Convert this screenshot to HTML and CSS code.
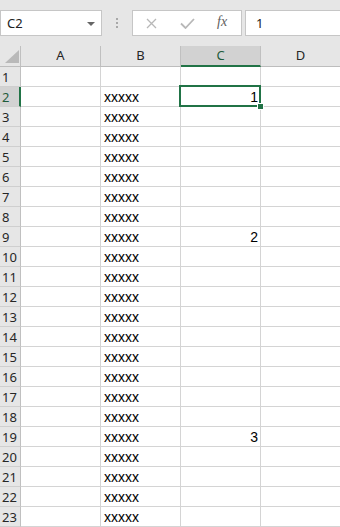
FILE: index.html
```html
<!DOCTYPE html>
<html lang="en">
<head>
    <meta charset="UTF-8">
    <meta name="viewport" content="width=device-width, initial-scale=1.0">
    <title>Sheet1</title>
    <link rel="stylesheet" href="styles.css">
</head>
<body>
    <div class="bar">
        <div class="namebox">
            <span>C2</span>
            <svg class="caret" width="8" height="4" viewBox="0 0 8 4"><polygon points="0,0 8,0 4,4" fill="#666"/></svg>
        </div>
        <div class="grip"><i></i><i></i><i></i></div>
        <div class="fxbtns">
            <svg class="btn-x" width="11" height="11" viewBox="0 0 11 11"><path d="M1 1 L10 10 M10 1 L1 10" stroke="#b8b8b8" stroke-width="1.3" fill="none"/></svg>
            <svg class="btn-ok" width="15" height="11" viewBox="0 0 15 11"><path d="M1 5.5 L5.5 10 L14 1" stroke="#b8b8b8" stroke-width="1.8" fill="none"/></svg>
            <span class="fx">fx</span>
        </div>
        <div class="formula">1</div>
    </div>

    <div class="sheet">
        <div class="row head">
            <div class="corner"><svg width="14" height="13" viewBox="0 0 14 13"><polygon points="14,0 14,13 0,13" fill="#b9b9b9"/></svg></div>
            <div class="col">A</div>
            <div class="col">B</div>
            <div class="col sel">C</div>
            <div class="col">D</div>
        </div>
        <div class="row"><div class="num">1</div><div class="cell"></div><div class="cell"></div><div class="cell"></div><div class="cell"></div></div>
        <div class="row"><div class="num sel">2</div><div class="cell"></div><div class="cell">xxxxx</div><div class="cell val active">1<span class="selbox"><b></b></span></div><div class="cell"></div></div>
        <div class="row"><div class="num">3</div><div class="cell"></div><div class="cell">xxxxx</div><div class="cell"></div><div class="cell"></div></div>
        <div class="row"><div class="num">4</div><div class="cell"></div><div class="cell">xxxxx</div><div class="cell"></div><div class="cell"></div></div>
        <div class="row"><div class="num">5</div><div class="cell"></div><div class="cell">xxxxx</div><div class="cell"></div><div class="cell"></div></div>
        <div class="row"><div class="num">6</div><div class="cell"></div><div class="cell">xxxxx</div><div class="cell"></div><div class="cell"></div></div>
        <div class="row"><div class="num">7</div><div class="cell"></div><div class="cell">xxxxx</div><div class="cell"></div><div class="cell"></div></div>
        <div class="row"><div class="num">8</div><div class="cell"></div><div class="cell">xxxxx</div><div class="cell"></div><div class="cell"></div></div>
        <div class="row"><div class="num">9</div><div class="cell"></div><div class="cell">xxxxx</div><div class="cell val">2</div><div class="cell"></div></div>
        <div class="row"><div class="num">10</div><div class="cell"></div><div class="cell">xxxxx</div><div class="cell"></div><div class="cell"></div></div>
        <div class="row"><div class="num">11</div><div class="cell"></div><div class="cell">xxxxx</div><div class="cell"></div><div class="cell"></div></div>
        <div class="row"><div class="num">12</div><div class="cell"></div><div class="cell">xxxxx</div><div class="cell"></div><div class="cell"></div></div>
        <div class="row"><div class="num">13</div><div class="cell"></div><div class="cell">xxxxx</div><div class="cell"></div><div class="cell"></div></div>
        <div class="row"><div class="num">14</div><div class="cell"></div><div class="cell">xxxxx</div><div class="cell"></div><div class="cell"></div></div>
        <div class="row"><div class="num">15</div><div class="cell"></div><div class="cell">xxxxx</div><div class="cell"></div><div class="cell"></div></div>
        <div class="row"><div class="num">16</div><div class="cell"></div><div class="cell">xxxxx</div><div class="cell"></div><div class="cell"></div></div>
        <div class="row"><div class="num">17</div><div class="cell"></div><div class="cell">xxxxx</div><div class="cell"></div><div class="cell"></div></div>
        <div class="row"><div class="num">18</div><div class="cell"></div><div class="cell">xxxxx</div><div class="cell"></div><div class="cell"></div></div>
        <div class="row"><div class="num">19</div><div class="cell"></div><div class="cell">xxxxx</div><div class="cell val">3</div><div class="cell"></div></div>
        <div class="row"><div class="num">20</div><div class="cell"></div><div class="cell">xxxxx</div><div class="cell"></div><div class="cell"></div></div>
        <div class="row"><div class="num">21</div><div class="cell"></div><div class="cell">xxxxx</div><div class="cell"></div><div class="cell"></div></div>
        <div class="row"><div class="num">22</div><div class="cell"></div><div class="cell">xxxxx</div><div class="cell"></div><div class="cell"></div></div>
        <div class="row"><div class="num">23</div><div class="cell"></div><div class="cell">xxxxx</div><div class="cell"></div><div class="cell"></div></div>
    </div>
</body>
</html>
```

FILE: styles.css
```css
body {
    margin: 0;
    width: 340px;
    height: 527px;
    overflow: hidden;
    background: #ffffff;
    font-family: "Noto Sans", Arial, sans-serif;
}
.bar {
    display: flex;
    height: 46px;
    padding-top: 10px;
    box-sizing: border-box;
    background: #e6e6e6;
}
.namebox {
    display: flex;
    align-items: center;
    justify-content: space-between;
    width: 102px;
    height: 26px;
    box-sizing: border-box;
    padding: 0 6px 0 6px;
    background: #fff;
    border: 1px solid #c6c6c6;
    font-size: 13px;
    color: #222;
}
.namebox .caret {
    margin-top: 1px;
}
.grip {
    width: 30px;
    height: 26px;
    display: flex;
    flex-direction: column;
    align-items: center;
    justify-content: center;
    gap: 2px;
}
.grip i {
    display: block;
    width: 2px;
    height: 2px;
    background: #a8a8a8;
}
.fxbtns {
    display: flex;
    align-items: center;
    width: 110px;
    height: 26px;
    box-sizing: border-box;
    background: #fff;
    border: 1px solid #c6c6c6;
}
.btn-x {
    margin-left: 13px;
}
.btn-ok {
    margin-left: 23px;
}
.fx {
    margin-left: 22px;
    font-family: "Liberation Serif", serif;
    font-style: italic;
    font-size: 14px;
    color: #606060;
    margin-top: -2px;
}
.formula {
    flex: 1;
    margin-left: 3px;
    margin-right: -2px;
    height: 26px;
    box-sizing: border-box;
    padding-left: 10px;
    line-height: 24px;
    background: #fff;
    border: 1px solid #c6c6c6;
    font-size: 13px;
    color: #222;
}
.sheet {
    background: #fff;
}
.row {
    display: grid;
    grid-template-columns: 21px 80px 80px 80px 80px;
    height: 20px;
}
.row > div {
    box-sizing: border-box;
    height: 20px;
    line-height: 20px;
    border-right: 1px solid #d4d4d4;
    border-bottom: 1px solid #d4d4d4;
    white-space: nowrap;
    overflow: hidden;
}
.row.head {
    height: 21px;
}
.head > div {
    height: 21px;
    line-height: 19px;
    background: #e6e6e6;
    border-right-color: #c0c0c0;
    border-bottom-color: #bdbdbd;
}
.corner {
    position: relative;
}
.corner svg {
    position: absolute;
    left: 5px;
    bottom: 3px;
}
.col {
    text-align: center;
    font-size: 13px;
    color: #262626;
}
.col.sel {
    background: #d2d2d2 !important;
    border-bottom: 2px solid #217346 !important;
    color: #1e5b3a;
}
.num {
    padding-left: 2px;
    font-size: 13px;
    color: #262626;
    background: #e6e6e6;
    border-right-color: #c0c0c0 !important;
    border-bottom-color: #cfcfcf !important;
}
.num.sel {
    background: #d2d2d2;
    border-right: 2px solid #217346 !important;
    color: #1e5b3a;
}
.cell {
    padding: 0 2px 0 3px;
    font-family: "Liberation Sans", Arial, sans-serif;
    font-size: 14px;
    color: #000;
}
.cell.val {
    text-align: right;
}
.cell.active {
    position: relative;
    overflow: visible !important;
}
.selbox {
    position: absolute;
    left: -2px;
    top: -2px;
    right: -1px;
    bottom: -1px;
    border: 2px solid #217346;
    z-index: 2;
}
.selbox b {
    position: absolute;
    right: -5px;
    bottom: -5px;
    width: 5px;
    height: 5px;
    background: #217346;
    border: 1px solid #fff;
}
```
